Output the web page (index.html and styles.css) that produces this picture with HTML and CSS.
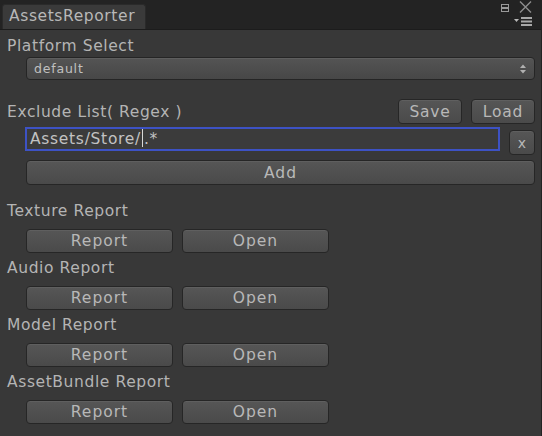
FILE: index.html
```html
<!DOCTYPE html>
<html>
<head>
<meta charset="utf-8">
<link rel="stylesheet" href="styles.css">
</head>
<body>
<div class="window">
  <div class="titlebar">
    <div class="tab">AssetsReporter</div>
    <div class="win-icons">
      <svg class="ico-max" width="8" height="8" viewBox="0 0 8 8"><rect x="0.5" y="0.5" width="7" height="7" fill="none" stroke="#9a9a9a"/><rect x="1" y="3" width="6" height="2" fill="#9a9a9a"/></svg>
      <svg class="ico-close" width="13" height="12" viewBox="0 0 13 12"><path d="M1 0.5 L12 11.5 M12 0.5 L1 11.5" stroke="#8e8e8e" stroke-width="1.4"/></svg>
    </div>
    <svg class="ico-menu" width="19" height="9" viewBox="0 0 19 9"><path d="M0 2 L5 2 L2.5 5 Z" fill="#b8b8b8"/><rect x="7" y="0" width="11" height="2" fill="#a8a8a8"/><rect x="7" y="3.5" width="11" height="2" fill="#a8a8a8"/><rect x="7" y="7" width="11" height="2" fill="#a8a8a8"/></svg>
  </div>
  <div class="content">
    <div class="label first">Platform Select</div>
    <div class="popup"><span>default</span><svg width="6" height="10" viewBox="0 0 6 10"><path d="M0 4 L3 0.5 L6 4 Z M0 6 L3 9.5 L6 6 Z" fill="#b0b0b0"/></svg></div>
    <div class="exclude-row">
      <div class="label">Exclude List( Regex )</div>
      <div class="btn small save">Save</div>
      <div class="btn small load">Load</div>
    </div>
    <div class="field-row">
      <div class="field">Assets/Store/<span class="caret"></span>.*</div>
      <div class="btn xbtn">x</div>
    </div>
    <div class="btn add">Add</div>

    <div class="label section top">Texture Report</div>
    <div class="btn-row"><div class="btn rep">Report</div><div class="btn rep">Open</div></div>
    <div class="label section">Audio Report</div>
    <div class="btn-row"><div class="btn rep">Report</div><div class="btn rep">Open</div></div>
    <div class="label section">Model Report</div>
    <div class="btn-row"><div class="btn rep">Report</div><div class="btn rep">Open</div></div>
    <div class="label section">AssetBundle Report</div>
    <div class="btn-row"><div class="btn rep">Report</div><div class="btn rep">Open</div></div>
  </div>
</div>
</body>
</html>
```
FILE: styles.css
```css
html, body {
  margin: 0;
  padding: 0;
}
body {
  width: 542px;
  height: 436px;
  overflow: hidden;
  background: #383838;
  font-family: "DejaVu Sans", sans-serif;
  color: #b4b4b4;
}
.window {
  width: 542px;
  height: 436px;
  display: flex;
  flex-direction: column;
  box-sizing: border-box;
  border-right: 1px solid #232323;
}
.titlebar {
  height: 30px;
  flex: none;
  background: #232323;
  position: relative;
  display: flex;
  align-items: flex-end;
  padding-left: 2px;
  box-sizing: border-box;
  border-bottom: 1px solid #1c1c1c;
}
.tab {
  width: 144px;
  height: 25px;
  box-sizing: border-box;
  background: #3a3a3a;
  border: 1px solid #2a2a2a;
  border-bottom: none;
  border-top-left-radius: 3px;
  border-top-right-radius: 3px;
  font-size: 15.5px;
  line-height: 23px;
  padding-left: 6px;
  color: #b8b8b8;
  white-space: nowrap;
  letter-spacing: 0.6px;
}
.win-icons {
  position: absolute;
  top: 1px;
  right: 9px;
  display: flex;
  align-items: center;
  gap: 10px;
}
.ico-max { margin-top: 2px; }
.ico-menu {
  position: absolute;
  top: 17px;
  right: 8px;
}
.content {
  flex: 1;
  display: flex;
  flex-direction: column;
  padding: 0 6px 0 7px;
}
.label {
  font-size: 15.5px;
  line-height: 20px;
  height: 20px;
  color: #b4b4b4;
  white-space: nowrap;
  letter-spacing: 0.6px;
}
.label.first { margin-top: 6px; }
.popup {
  margin: 1px 0 0 19px;
  height: 23px;
  flex: none;
  box-sizing: border-box;
  border: 1px solid #252525;
  border-radius: 4px;
  background: linear-gradient(#545454, #474747);
  box-shadow: inset 0 1px 0 #5e5e5e;
  display: flex;
  align-items: center;
  justify-content: space-between;
  padding: 0 8px 0 7px;
  font-size: 12.5px;
  color: #c0c0c0;
}
.popup span { letter-spacing: 0.8px; }
.btn {
  box-sizing: border-box;
  border: 1px solid #262626;
  border-radius: 4px;
  background: linear-gradient(#565656, #4a4a4a);
  box-shadow: inset 0 1px 0 #5f5f5f;
  display: flex;
  align-items: center;
  justify-content: center;
  font-size: 15.5px;
  color: #b8b8b8;
  letter-spacing: 1px;
  flex: none;
}
.exclude-row {
  display: flex;
  align-items: flex-end;
  margin-top: 19px;
  height: 25px;
  flex: none;
}
.exclude-row .label {
  flex: 1;
  margin-bottom: 2px;
}
.btn.small {
  width: 64px;
  height: 25px;
  letter-spacing: 0.8px;
}
.btn.save { margin-right: 9px; }
.field-row {
  display: flex;
  align-items: flex-start;
  margin-top: 3px;
  height: 28px;
  flex: none;
}
.field {
  margin-left: 18px;
  width: 475px;
  height: 24px;
  box-sizing: border-box;
  border: 2px solid #3d52c4;
  background: #3b3b3b;
  font-size: 15.5px;
  line-height: 20px;
  padding-left: 3px;
  color: #c2c2c2;
  letter-spacing: 0.7px;
  white-space: nowrap;
}
.caret {
  display: inline-block;
  width: 1px;
  height: 18px;
  background: #d8d8d8;
  vertical-align: -3px;
  margin: 0 1px;
}
.btn.xbtn {
  margin-left: 9px;
  margin-top: 3px;
  width: 26px;
  height: 25px;
  font-size: 14px;
  letter-spacing: 0;
}
.btn.add {
  margin: 5px 0 0 19px;
  height: 25px;
}
.label.section {
  margin-top: 5px;
}
.label.section.top {
  margin-top: 16px;
}
.btn-row {
  display: flex;
  gap: 9px;
  margin: 8px 0 0 19px;
  flex: none;
}
.btn.rep {
  width: 147px;
  height: 24px;
}
```
